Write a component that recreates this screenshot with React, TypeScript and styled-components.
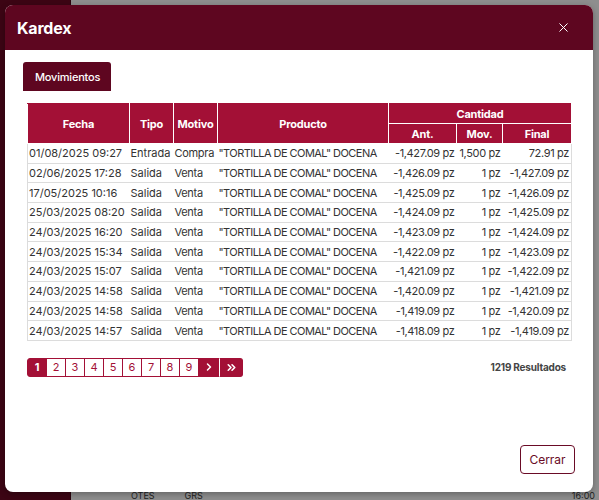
import styled, { createGlobalStyle } from "styled-components";
import { ChevronRight, ChevronsRight, X } from "lucide-react";

const GlobalStyle = createGlobalStyle`
  html, body {
    margin: 0;
    padding: 0;
    width: 599px;
    height: 500px;
    overflow: hidden;
    font-family: Inter, "Noto Sans", sans-serif;
  }
`;

const Page = styled.div`
  position: relative;
  width: 599px;
  height: 500px;
  display: flex;
  background: #8e8e8e;
  overflow: hidden;
`;

const Sidebar = styled.div`
  width: 70px;
  background: #3c0514;
  border-right: 1px solid #2a030d;
`;

const Backdrop = styled.div`
  flex: 1;
  display: flex;
  flex-direction: column;
  justify-content: flex-end;
  padding: 0 4px 0 60px;
  color: #222;
  font-size: 9px;
`;

const BackRow = styled.div`
  display: flex;
  gap: 30px;
  height: 8px;
  line-height: 8px;
  & > span:last-child {
    margin-left: auto;
  }
`;

const Modal = styled.div`
  position: absolute;
  left: 5px;
  top: 5px;
  width: 588px;
  height: 487px;
  background: #fff;
  border-radius: 8px;
  display: flex;
  flex-direction: column;
  overflow: hidden;
  box-shadow: 0 2px 6px rgba(0, 0, 0, 0.3);
`;

const Header = styled.div`
  height: 45px;
  flex-shrink: 0;
  background: #5e0620;
  display: flex;
  align-items: center;
  justify-content: space-between;
  padding: 0 22px 0 12px;
  color: #fff;
`;

const Title = styled.h2`
  margin: 0;
  font-size: 16px;
  font-weight: 700;
  letter-spacing: -0.2px;
`;

const CloseBtn = styled.span`
  display: flex;
  color: #fff;
`;

const Body = styled.div`
  flex: 1;
  display: flex;
  flex-direction: column;
  padding: 12px 18px 18px;
`;

const Tabs = styled.div`
  display: flex;
`;

const Tab = styled.div`
  background: #5e0620;
  color: #fff;
  font-size: 11px;
  font-weight: 500;
  height: 29px;
  padding: 0 11px 0 12px;
  display: flex;
  align-items: center;
  border-radius: 3px 3px 0 0;
  letter-spacing: -0.2px;
`;

const Panel = styled.div`
  padding: 12px 4px 0;
  display: flex;
  flex-direction: column;
`;

const Table = styled.table`
  width: 544px;
  table-layout: fixed;
  border-collapse: collapse;
  font-size: 11px;
  color: #333;
  border: 1px solid #dcdcdc;
`;

const Th = styled.th`
  background: #a31036;
  color: #fff;
  font-weight: 700;
  font-size: 11px;
  height: 19px;
  padding: 0;
  border: 1px solid #fff;
  border-top-color: #a31036;
  letter-spacing: -0.2px;
`;

const Td = styled.td<{ $right?: boolean; $tight?: number }>`
  height: 18.7px;
  padding: 0 2px 0 1px;
  white-space: nowrap;
  overflow: hidden;
  border-bottom: 1px solid #dcdcdc;
  text-align: ${(p) => (p.$right ? "right" : "left")};
  letter-spacing: ${(p) => p.$tight ?? 0}px;
`;

const PagerRow = styled.div`
  display: flex;
  align-items: center;
  justify-content: space-between;
  margin-top: 17px;
  padding: 0 5px 0 0;
`;

const Pager = styled.div`
  display: flex;
`;

const PageBtn = styled.span<{ $active?: boolean; $first?: boolean; $last?: boolean; $w?: number }>`
  width: ${(p) => p.$w ?? 20}px;
  height: 19px;
  box-sizing: border-box;
  display: flex;
  align-items: center;
  justify-content: center;
  font-size: 11px;
  font-weight: ${(p) => (p.$active ? 700 : 400)};
  color: ${(p) => (p.$active ? "#fff" : "#a31036")};
  background: ${(p) => (p.$active ? "#a31036" : "#fff")};
  border: 1px solid #a31036;
  margin-left: ${(p) => (p.$first ? 0 : -1)}px;
  border-radius: ${(p) => (p.$first ? "3px 0 0 3px" : p.$last ? "0 3px 3px 0" : "0")};
  ${(p) => p.$last && "border-left: 1px solid #fff; margin-left: 0;"}
`;

const Results = styled.span`
  font-size: 10px;
  font-weight: 700;
  color: #444;
  letter-spacing: -0.2px;
`;

const Footer = styled.div`
  margin-top: auto;
  display: flex;
  justify-content: flex-end;
`;

const CerrarBtn = styled.button`
  font-family: inherit;
  font-size: 12px;
  color: #6a0b26;
  background: #fff;
  border: 1px solid #6a0b26;
  border-radius: 4px;
  width: 55px;
  height: 29px;
  padding: 0;
`;

const rows = [
  ["01/08/2025 09:27", "Entrada", "Compra", "-1,427.09 pz", "1,500 pz", "72.91 pz"],
  ["02/06/2025 17:28", "Salida", "Venta", "-1,426.09 pz", "1 pz", "-1,427.09 pz"],
  ["17/05/2025 10:16", "Salida", "Venta", "-1,425.09 pz", "1 pz", "-1,426.09 pz"],
  ["25/03/2025 08:20", "Salida", "Venta", "-1,424.09 pz", "1 pz", "-1,425.09 pz"],
  ["24/03/2025 16:20", "Salida", "Venta", "-1,423.09 pz", "1 pz", "-1,424.09 pz"],
  ["24/03/2025 15:34", "Salida", "Venta", "-1,422.09 pz", "1 pz", "-1,423.09 pz"],
  ["24/03/2025 15:07", "Salida", "Venta", "-1,421.09 pz", "1 pz", "-1,422.09 pz"],
  ["24/03/2025 14:58", "Salida", "Venta", "-1,420.09 pz", "1 pz", "-1,421.09 pz"],
  ["24/03/2025 14:58", "Salida", "Venta", "-1,419.09 pz", "1 pz", "-1,420.09 pz"],
  ["24/03/2025 14:57", "Salida", "Venta", "-1,418.09 pz", "1 pz", "-1,419.09 pz"],
];

const colWidths = [102, 44, 44, 171, 68, 46, 69];

export default function App() {
  return (
    <>
      <GlobalStyle />
      <Page>
        <Sidebar />
        <Backdrop>
          <BackRow>
            <span>OTES</span>
            <span>GRS</span>
            <span>16:00</span>
          </BackRow>
        </Backdrop>
        <Modal>
          <Header>
            <Title>Kardex</Title>
            <CloseBtn>
              <X size={15} strokeWidth={1.6} />
            </CloseBtn>
          </Header>
          <Body>
            <Tabs>
              <Tab>Movimientos</Tab>
            </Tabs>
            <Panel>
              <Table>
                <colgroup>
                  {colWidths.map((w, i) => (
                    <col key={i} width={w} />
                  ))}
                </colgroup>
                <thead>
                  <tr>
                    <Th rowSpan={2}>Fecha</Th>
                    <Th rowSpan={2}>Tipo</Th>
                    <Th rowSpan={2}>Motivo</Th>
                    <Th rowSpan={2}>Producto</Th>
                    <Th colSpan={3}>Cantidad</Th>
                  </tr>
                  <tr>
                    <Th>Ant.</Th>
                    <Th>Mov.</Th>
                    <Th>Final</Th>
                  </tr>
                </thead>
                <tbody>
                  {rows.map((r, i) => (
                    <tr key={i}>
                      <Td>{r[0]}</Td>
                      <Td>{r[1]}</Td>
                      <Td $tight={-0.3}>{r[2]}</Td>
                      <Td $tight={-0.55}>"TORTILLA DE COMAL" DOCENA</Td>
                      <Td $right $tight={-0.35}>{r[3]}</Td>
                      <Td $right $tight={-0.35}>{r[4]}</Td>
                      <Td $right $tight={-0.35}>{r[5]}</Td>
                    </tr>
                  ))}
                </tbody>
              </Table>
              <PagerRow>
                <Pager>
                  <PageBtn $active $first>1</PageBtn>
                  {[2, 3, 4, 5, 6, 7, 8, 9].map((n) => (
                    <PageBtn key={n}>{n}</PageBtn>
                  ))}
                  <PageBtn $active $w={21}>
                    <ChevronRight size={12} strokeWidth={3} />
                  </PageBtn>
                  <PageBtn $active $last $w={24}>
                    <ChevronsRight size={13} strokeWidth={3} />
                  </PageBtn>
                </Pager>
                <Results>1219 Resultados</Results>
              </PagerRow>
            </Panel>
            <Footer>
              <CerrarBtn>Cerrar</CerrarBtn>
            </Footer>
          </Body>
        </Modal>
      </Page>
    </>
  );
}
